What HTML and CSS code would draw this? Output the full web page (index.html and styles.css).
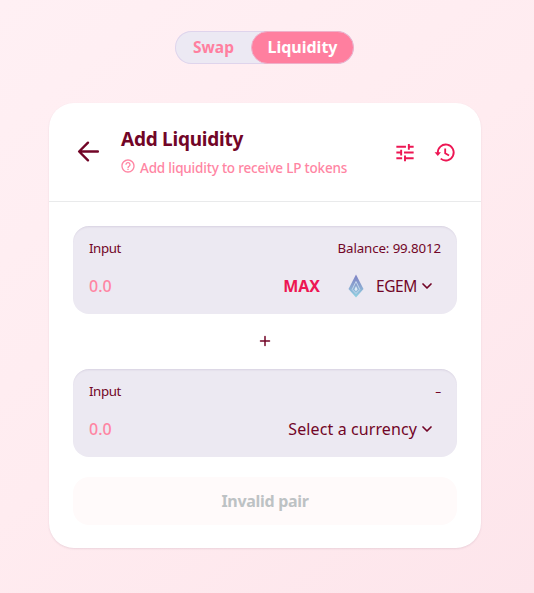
FILE: index.html
```html
<!DOCTYPE html>
<html lang="en">
<head>
<meta charset="utf-8">
<title>Add Liquidity</title>
<link rel="stylesheet" href="styles.css">
</head>
<body>
<nav class="tabs">
  <a class="tab tab-swap"><span class="t-swap">Swap</span></a>
  <a class="tab tab-active"><span class="t-liq">Liquidity</span></a>
</nav>
<main class="card">
  <header class="head">
    <svg class="back" viewBox="0 0 24 24"><path d="M21 12H3.500M11.500 3.500L3 12l8.500 8.500" fill="none" stroke="currentColor" stroke-width="2.300" stroke-linecap="round" stroke-linejoin="round"/></svg>
    <div class="titles">
      <h1><span class="t-title">Add Liquidity</span></h1>
      <p class="sub">
        <svg class="help" viewBox="0 0 24 24"><path fill="currentColor" d="M11 18h2v-2h-2v2zm1-16C6.480 2 2 6.480 2 12s4.480 10 10 10 10-4.480 10-10S17.520 2 12 2zm0 18c-4.410 0-8-3.590-8-8s3.590-8 8-8 8 3.590 8 8-3.590 8-8 8zm0-14c-2.210 0-4 1.790-4 4h2c0-1.100.9-2 2-2s2 .9 2 2c0 2-3 1.750-3 5h2c0-2.250 3-2.500 3-5 0-2.210-1.790-4-4-4z"/></svg>
        <span class="t-sub">Add liquidity to receive LP tokens</span>
      </p>
    </div>
    <div class="tools">
      <svg viewBox="-.5 0 25 25"><path fill="currentColor" d="M3 17v2h6v-2H3zM3 5v2h10V5H3zm10 16v-2h8v-2h-8v-2h-2v6h2zM7 9v2H3v2h4v2h2V9H7zm14 4v-2H11v2h10zm-6-4h2V7h4V5h-4V3h-2v6z"/></svg>
      <svg viewBox="0 0 25 25"><path d="M5 12.600a8.300 8.300 0 1 1 3 5.800M12.700 7.700v5l4 2.400" fill="none" stroke="currentColor" stroke-width="1.900"/><path fill="currentColor" d="M1.600 11.800h6.700L5 15.500z"/></svg>
    </div>
  </header>
  <div class="body">
    <section class="panel">
      <div class="row labels"><span class="t-input">Input</span><span class="t-bal">Balance: 99.8012</span></div>
      <div class="row values">
        <span class="amount">0.0</span>
        <span class="max">MAX</span>
        <svg class="gem" viewBox="0 0 16 24">
          <defs><linearGradient id="g" x1="0" y1="0" x2="0" y2="1"><stop offset="0" stop-color="#7c7fc4"/><stop offset=".5" stop-color="#8ba5d0"/><stop offset="1" stop-color="#8fd3e2"/></linearGradient></defs>
          <path fill="url(#g)" d="M8 .5l7.500 14.500L8 23.500.5 15z"/>
          <path fill="none" stroke="#c9daee" stroke-width=".9" d="M8 7.500l3.800 8L8 19.500l-3.800-4z"/>
          <path fill="#dce9f5" d="M8 12l1.600 3.500L8 17.200l-1.600-1.700z"/>
        </svg>
        <span class="token t-egem">EGEM</span>
        <svg class="chev" viewBox="0 0 12 8"><path d="M2 2l4 4 4-4" fill="none" stroke="currentColor" stroke-width="1.700" stroke-linecap="round" stroke-linejoin="round"/></svg>
      </div>
    </section>
    <div class="plus"><svg viewBox="0 0 12 12"><path d="M6 1.500v9M1.500 6h9" stroke="currentColor" stroke-width="1.500" stroke-linecap="round"/></svg></div>
    <section class="panel">
      <div class="row labels"><span class="t-input">Input</span><span class="dash">-</span></div>
      <div class="row values">
        <span class="amount">0.0</span>
        <span class="token t-select">Select a currency</span>
        <svg class="chev" viewBox="0 0 12 8"><path d="M2 2l4 4 4-4" fill="none" stroke="currentColor" stroke-width="1.700" stroke-linecap="round" stroke-linejoin="round"/></svg>
      </div>
    </section>
    <button class="submit" disabled><span class="t-invalid">Invalid pair</span></button>
  </div>
</main>
</body>
</html>
```
FILE: styles.css
```css
* { box-sizing: border-box; }
body {
  margin: 0;
  height: 593px;
  padding-top: 31px;
  overflow: hidden;
  font-family: "Noto Sans", sans-serif;
  color: #720527;
  background: linear-gradient(140deg, #fff0f4 0%, #ffecf0 50%, #fde5eb 100%);
}
svg { display: block; flex: none; }
span { white-space: nowrap; }
.tabs {
  display: flex;
  width: 179px;
  height: 33px;
  margin-left: 175px;
  border-radius: 17px;
  background: #ece9f3;
  box-shadow: inset 0 0 0 1px #dfd4ec;
}
.tab {
  display: flex;
  align-items: center;
  justify-content: center;
  font-size: 16px;
  font-weight: 700;
  line-height: 31px;
  padding-bottom: 1px;
}
.tab-swap { width: 76px; padding-left: 1px; color: #ff7f9f; font-size: 15.5px; }
.tab-active {
  width: 103px;
  color: #fff;
  background: #ff7f9f;
  border: 1px solid #efb0ca;
  border-radius: 17px;
}
.card {
  width: 432px;
  height: 445px;
  margin: 39px 0 0 49px;
  border-radius: 25px;
  background: #fff;
  box-shadow: 0 1px 2px rgba(100, 50, 80, .12);
}
.head {
  display: flex;
  height: 99px;
  padding: 24px 23px 0 27px;
  border-bottom: 1px solid #e9eaeb;
}
.back { width: 25px; height: 25px; margin-top: 12px; }
.titles { width: 260px; margin-left: 20px; }
h1 {
  margin: 0;
  height: 24px;
  font-size: 19px;
  line-height: 24px;
  font-weight: 700;
  letter-spacing: -.25px;
}
.sub {
  display: flex;
  margin: 6px 0 0;
  height: 21px;
  font-size: 13.5px;
  font-weight: 500;
  line-height: 22px;
  letter-spacing: -.2px;
  color: #ff85a3;
}
.help { width: 16px; height: 16px; margin: 1px 4px 0 -1px; }
.tools { display: flex; gap: 16px; margin: 14px 0 0 12px; color: #ed1653; }
.tools svg { width: 24px; height: 24px; }
.body { padding: 24px; }
.panel {
  height: 88px;
  padding: 12px 16px 0;
  border-radius: 16px;
  background: #ece9f2;
  box-shadow: inset 0 2px 2px -1px rgba(74, 50, 104, .12);
}
.row { display: flex; align-items: center; }
.labels {
  height: 20px;
  justify-content: space-between;
  font-size: 13.3px;
  letter-spacing: -.12px;
}
.t-input { letter-spacing: -.4px; }
.dash { transform: scaleX(1.5); transform-origin: right; }
.values { height: 28px; margin-top: 14px; font-size: 16px; }
.amount { margin-right: auto; color: #ff85a3; font-weight: 500; }
.max { margin-right: 28px; color: #ed1653; font-weight: 700; }
.gem { width: 16px; height: 24px; margin-right: 12px; }
.t-egem { font-size: 15.5px; letter-spacing: -.4px; }
.t-select { letter-spacing: .1px; }
.chev { width: 12px; height: 8px; margin: 0 8px 0 4px; }
.plus { display: flex; height: 55px; padding-bottom: 1px; align-items: center; justify-content: center; }
.plus svg { width: 12px; height: 12px; }
.submit {
  display: flex;
  align-items: center;
  justify-content: center;
  width: 100%;
  height: 48px;
  margin-top: 20px;
  padding: 0;
  border: 0;
  border-radius: 16px;
  background: #fffafa;
  color: #bdc2c4;
  font: 700 16px "Noto Sans", sans-serif;
  letter-spacing: -.3px;
}
```
